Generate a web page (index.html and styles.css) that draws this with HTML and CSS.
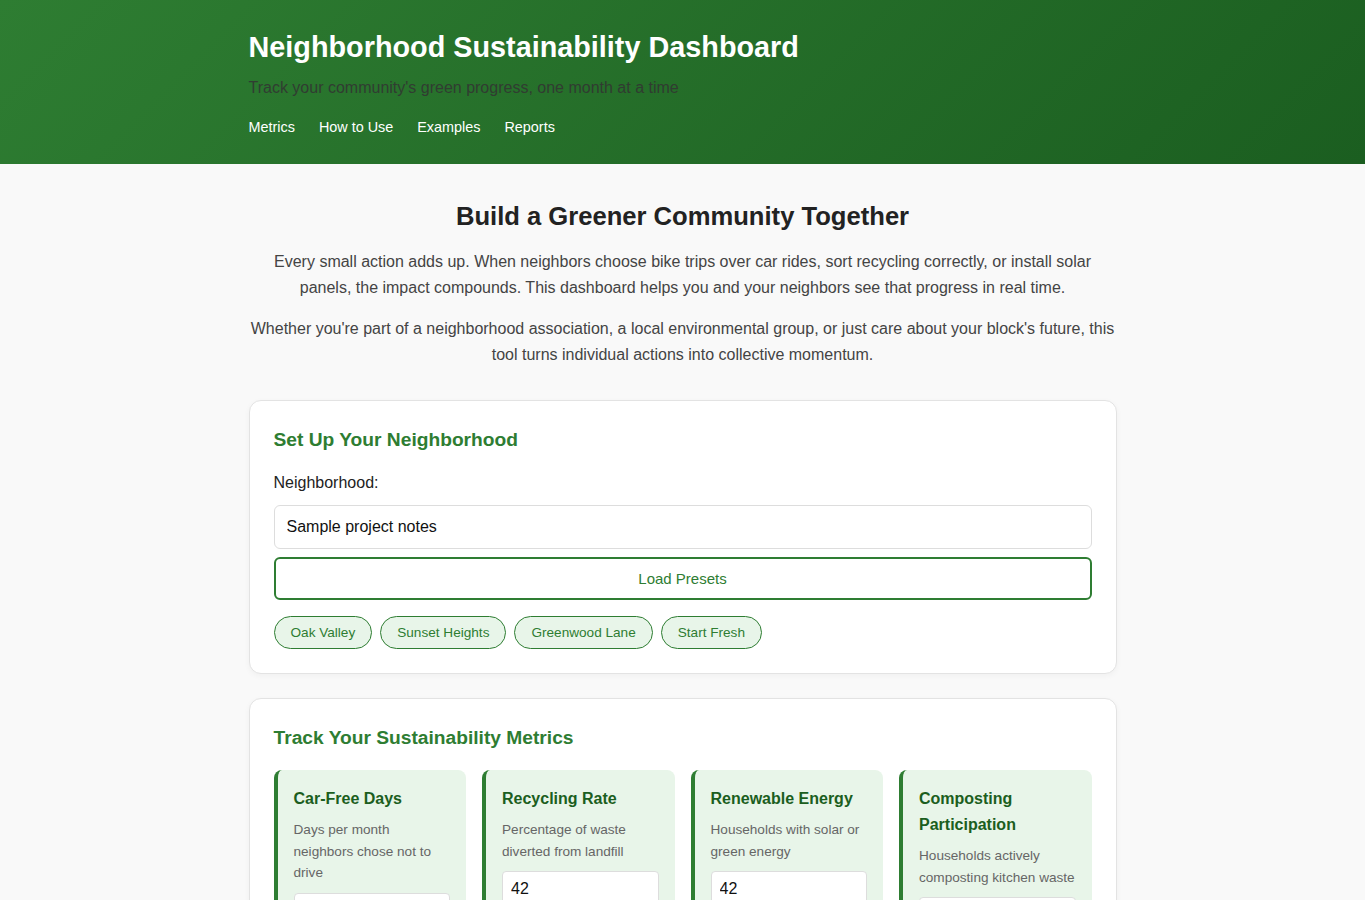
FILE: index.html
```html
<!DOCTYPE html>
<html lang="en">
<head>
<meta charset="utf-8">
<title>Neighborhood Sustainability Dashboard</title>
<link rel="stylesheet" href="styles.css">
</head>
<body>
<header class="site-header">
  <div class="wrap">
    <h1 class="site-title">Neighborhood Sustainability Dashboard</h1>
    <p class="site-tagline">Track your community's green progress, one month at a time</p>
    <nav class="site-nav">
      <a href="#metrics">Metrics</a>
      <a href="#how">How to Use</a>
      <a href="#examples">Examples</a>
      <a href="#reports">Reports</a>
    </nav>
  </div>
</header>

<main class="wrap main">
  <section class="intro">
    <h2 class="intro-title">Build a Greener Community Together</h2>
    <p>Every small action adds up. When neighbors choose bike trips over car rides, sort recycling correctly, or install solar panels, the impact compounds. This dashboard helps you and your neighbors see that progress in real time.</p>
    <p>Whether you're part of a neighborhood association, a local environmental group, or just care about your block's future, this tool turns individual actions into collective momentum.</p>
  </section>

  <section class="card">
    <h3 class="card-title">Set Up Your Neighborhood</h3>
    <label class="field-label" for="hood">Neighborhood:</label>
    <input class="text-input" id="hood" type="text" value="Sample project notes">
    <button class="btn-outline" type="button">Load Presets</button>
    <div class="pills">
      <button class="pill" type="button">Oak Valley</button>
      <button class="pill" type="button">Sunset Heights</button>
      <button class="pill" type="button">Greenwood Lane</button>
      <button class="pill" type="button">Start Fresh</button>
    </div>
  </section>

  <section class="card" id="metrics">
    <h3 class="card-title">Track Your Sustainability Metrics</h3>
    <div class="metric-grid">
      <div class="metric">
        <h4 class="metric-name">Car-Free Days</h4>
        <p class="metric-desc">Days per month neighbors chose not to drive</p>
        <input class="metric-input" type="text" value="">
      </div>
      <div class="metric">
        <h4 class="metric-name">Recycling Rate</h4>
        <p class="metric-desc">Percentage of waste diverted from landfill</p>
        <input class="metric-input" type="text" value="42">
      </div>
      <div class="metric">
        <h4 class="metric-name">Renewable Energy</h4>
        <p class="metric-desc">Households with solar or green energy</p>
        <input class="metric-input" type="text" value="42">
      </div>
      <div class="metric">
        <h4 class="metric-name">Composting Participation</h4>
        <p class="metric-desc">Households actively composting kitchen waste</p>
        <input class="metric-input" type="text" value="">
      </div>
    </div>
  </section>
</main>
</body>
</html>
```

FILE: styles.css
```css
* {
  box-sizing: border-box;
}

body {
  margin: 0;
  background: #f9f9f9;
  color: #222;
  font-family: "Liberation Sans", Arial, sans-serif;
}

.wrap {
  max-width: 900px;
  margin: 0 auto;
  padding: 0 16px;
}

/* Header */
.site-header {
  background: linear-gradient(135deg, #2e7d32 0%, #1b5e20 100%);
  color: #fff;
  padding: 30px 0 26px;
}

.site-title {
  margin: 0 0 12px;
  font-size: 28.8px;
  line-height: 34px;
  font-weight: 700;
}

.site-tagline {
  margin: 0 0 16px;
  font-size: 16px;
  line-height: 24px;
  color: #333;
  opacity: 0.85;
}

.site-nav {
  display: flex;
  gap: 24px;
}

.site-nav a {
  color: #fff;
  text-decoration: none;
  font-size: 14.4px;
  line-height: 22px;
}

/* Intro */
.main {
  padding-top: 37px;
  padding-bottom: 40px;
}

.intro {
  text-align: center;
  margin-bottom: 32px;
}

.intro-title {
  margin: 0 0 17px;
  font-size: 25.6px;
  line-height: 31px;
  font-weight: 700;
  color: #222;
}

.intro p {
  margin: 0 0 15px;
  font-size: 16px;
  line-height: 26px;
  color: #444;
}

.intro p:last-child {
  margin-bottom: 0;
}

/* Cards */
.card {
  background: #fff;
  border: 1px solid #e3e3e3;
  border-radius: 12px;
  box-shadow: 0 2px 6px rgba(0, 0, 0, 0.04);
  padding: 26px 24px 24px;
  margin-bottom: 24px;
}

.card-title {
  margin: 0 0 19px;
  font-size: 19.2px;
  line-height: 26px;
  font-weight: 700;
  color: #2e7d32;
}

.field-label {
  display: block;
  font-size: 16px;
  line-height: 22px;
  color: #222;
  margin-bottom: 11px;
}

.text-input {
  display: block;
  width: 100%;
  height: 44px;
  padding: 0 12px;
  font-family: inherit;
  font-size: 16px;
  color: #111;
  border: 1px solid #ddd;
  border-radius: 6px;
  background: #fff;
}

.btn-outline {
  display: block;
  width: 100%;
  height: 43px;
  margin-top: 8px;
  font-family: inherit;
  font-size: 15px;
  color: #2e7d32;
  background: #fff;
  border: 2px solid #2e7d32;
  border-radius: 6px;
}

.pills {
  display: flex;
  flex-wrap: wrap;
  gap: 8px;
  margin-top: 16px;
}

.pill {
  height: 33px;
  padding: 0 16px;
  font-family: inherit;
  font-size: 13.6px;
  color: #2e7d32;
  background: #e8f5e9;
  border: 1px solid #2e7d32;
  border-radius: 20px;
}

/* Metrics */
.metric-grid {
  display: grid;
  grid-template-columns: repeat(4, 1fr);
  gap: 16px;
}

.metric {
  background: #e8f5e9;
  border-left: 4px solid #2e7d32;
  border-radius: 8px;
  padding: 16px;
}

.metric-name {
  margin: 0 0 7px;
  font-size: 16px;
  line-height: 26px;
  font-weight: 700;
  color: #1b5e20;
}

.metric-desc {
  margin: 0 0 9px;
  font-size: 13.6px;
  line-height: 21.6px;
  color: #666;
}

.metric-input {
  display: block;
  width: 100%;
  height: 36px;
  padding: 0 8px;
  font-family: inherit;
  font-size: 16px;
  color: #111;
  background: #fff;
  border: 1px solid #ddd;
  border-radius: 4px;
}
```
